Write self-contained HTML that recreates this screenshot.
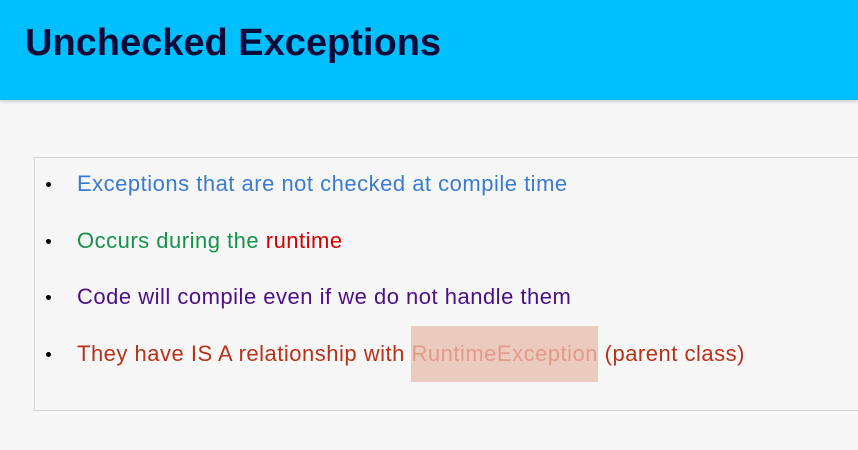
<!DOCTYPE html>
<html><head><style>
body{margin:0;width:858px;height:450px;background:#f7f7f7;position:relative;overflow:hidden;font-family:"Liberation Sans",sans-serif}
.hdr{position:absolute;left:0;top:0;width:858px;height:100px;background:#00bfff;box-shadow:0 2px 3px rgba(0,0,0,.15)}
.hdr h1{position:absolute;left:25px;top:21px;margin:0;font-size:38px;line-height:44px;font-weight:bold;color:#0b0b3a}
.box{position:absolute;left:34px;top:157px;width:840px;height:252px;border:1px solid #d6d6d6}
.l{position:absolute;left:77px;font-size:22px;letter-spacing:0.5px;white-space:nowrap;line-height:26px}
.b{position:absolute;left:46px;width:5px;height:5px;border-radius:50%;background:#000}
.hl{display:inline-block;background:#eccbbf;color:#e49a8a;padding:15px 0;margin:-15px 0}
</style></head><body>
<div class="hdr"><h1>Unchecked Exceptions</h1></div>
<div class="box"></div>
<div class="b" style="top:182px"></div>
<div class="l" style="top:171px;color:#3a7bd5">Exceptions that are not checked at compile time</div>
<div class="b" style="top:239px"></div>
<div class="l" style="top:228px;color:#14944a">Occurs during the <span style="color:#d00000">runtime</span></div>
<div class="b" style="top:295px"></div>
<div class="l" style="top:284px;color:#4b0f8a">Code will compile even if we do not handle them</div>
<div class="b" style="top:352px"></div>
<div class="l" style="top:341px;color:#b83218">They have IS A relationship with <span class="hl">RuntimeException</span> (parent class)</div>
</body></html>
